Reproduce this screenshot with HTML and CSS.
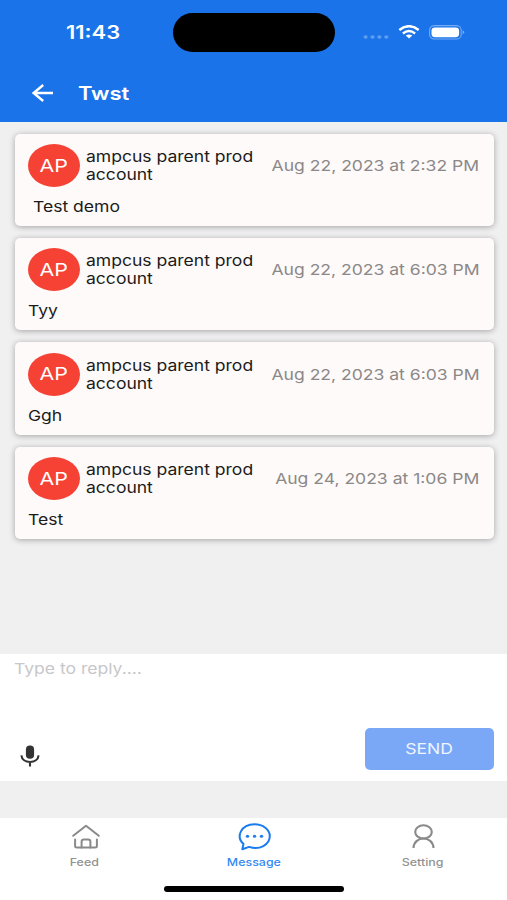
FILE: index.html
```html
<!DOCTYPE html>
<html lang="en">
<head>
<meta charset="utf-8">
<title>Twst</title>
<link rel="stylesheet" href="styles.css">
</head>
<body>
<div class="screen">
  <header class="header">
    <div class="status">
      <div class="clock"><span class="wide">11:43</span></div>
      <div class="island"></div>
      <div class="indicators">
        <svg class="dots" width="26" height="6" viewBox="0 0 26 6"><g fill="#5f9df1"><ellipse cx="2.6" cy="3" rx="2.1" ry="1.8"/><ellipse cx="9.5" cy="3" rx="2.1" ry="1.8"/><ellipse cx="16.4" cy="3" rx="2.1" ry="1.8"/><ellipse cx="23.3" cy="3" rx="2.1" ry="1.8"/></g></svg>
        <svg class="wifi" width="22" height="14" viewBox="0 0 22 14"><g fill="none" stroke="#fff" stroke-width="2.5"><path d="M1.3 5Q11-2.6 20.7 5"/><path d="M4.9 8.4Q11 3.6 17.1 8.4"/></g><path d="M7.7 10.6Q11 8.2 14.3 10.6L11 13.6Z" fill="#fff"/></svg>
        <svg class="battery" width="36" height="15" viewBox="0 0 36 15"><rect x=".6" y=".6" width="31.6" height="13.4" rx="4.6" fill="none" stroke="#75abf4" stroke-width="1.1"/><rect x="2.5" y="2.4" width="27.6" height="9.8" rx="3.4" fill="#fff"/><path d="M33.6 5.2q1.6.6 1.6 2.1t-1.6 2.1z" fill="#75abf4"/></svg>
      </div>
    </div>
    <div class="titlebar">
      <svg class="back" width="22" height="18" viewBox="0 0 22 18"><path d="M21 9H1.8M11.2 1L1.6 9l9.6 8" fill="none" stroke="#fff" stroke-width="2.4"/></svg>
      <h1 class="title"><span class="wide">Twst</span></h1>
    </div>
  </header>

  <main class="messages">
    <article class="card">
      <div class="meta">
        <div class="avatar"><span class="wide">AP</span></div>
        <div class="name"><span class="wide">ampcus parent prod<br>account</span></div>
        <time class="date"><span class="wide">Aug 22, 2023 at 2:32 PM</span></time>
      </div>
      <p class="text indented"><span class="wide">Test demo</span></p>
    </article>
    <article class="card">
      <div class="meta">
        <div class="avatar"><span class="wide">AP</span></div>
        <div class="name"><span class="wide">ampcus parent prod<br>account</span></div>
        <time class="date"><span class="wide">Aug 22, 2023 at 6:03 PM</span></time>
      </div>
      <p class="text"><span class="wide">Tyy</span></p>
    </article>
    <article class="card">
      <div class="meta">
        <div class="avatar"><span class="wide">AP</span></div>
        <div class="name"><span class="wide">ampcus parent prod<br>account</span></div>
        <time class="date"><span class="wide">Aug 22, 2023 at 6:03 PM</span></time>
      </div>
      <p class="text"><span class="wide">Ggh</span></p>
    </article>
    <article class="card">
      <div class="meta">
        <div class="avatar"><span class="wide">AP</span></div>
        <div class="name"><span class="wide">ampcus parent prod<br>account</span></div>
        <time class="date"><span class="wide">Aug 24, 2023 at 1:06 PM</span></time>
      </div>
      <p class="text"><span class="wide">Test</span></p>
    </article>
  </main>

  <section class="composer">
    <div class="placeholder"><span class="wide">Type to reply....</span></div>
    <div class="actions">
      <svg class="mic" width="20" height="22" viewBox="0 0 20 22"><rect x="5.9" y=".4" width="8.2" height="13.4" rx="4" fill="#333"/><path d="M1.4 10.4C1.8 14.6 5.5 17 10 17s8.2-2.4 8.6-6.6M10 17v4.5" fill="none" stroke="#333" stroke-width="2.1"/></svg>
      <div class="send"><span class="wide">SEND</span></div>
    </div>
  </section>

  <nav class="tabs">
    <div class="tab">
      <svg width="34" height="28" viewBox="0 0 34 28"><g fill="none" stroke="#8a8a8a" stroke-width="2" stroke-linecap="round" stroke-linejoin="round"><path d="M5.2 12.8L18 2.7 30.800 12.8M7.100 16.400v6.700q0 1.500 1.800 1.500h18.200q1.800 0 1.800-1.500v-6.700"/><path d="M13.600 24.500v-5.700q0-2.200 2.400-2.200h4q2.400 0 2.400 2.200v5.700"/></g></svg>
      <span class="wide">Feed</span>
    </div>
    <div class="tab active">
      <svg width="34" height="28" viewBox="0 0 34 28"><path d="M5.300 26.200L6.500 20.900C-1.400 13.800 3.900 1.200 17.500 1.200c8.500 0 15.300 5.300 15.300 11.900 0 8.700-10.300 14.500-20.700 10.800Z" fill="none" stroke="#1b7cf0" stroke-width="2" stroke-linejoin="round"/><g fill="#1b7cf0"><ellipse cx="10.500" cy="13.200" rx="1.700" ry="1.500"/><ellipse cx="17.500" cy="13.200" rx="1.700" ry="1.500"/><ellipse cx="24.500" cy="13.200" rx="1.700" ry="1.500"/></g></svg>
      <span class="wide">Message</span>
    </div>
    <div class="tab">
      <svg width="34" height="28" viewBox="0 0 34 28"><g fill="none" stroke="#8a8a8a" stroke-width="2.100"><ellipse cx="17.500" cy="8.900" rx="8.300" ry="6.600"/><path d="M7.500 25C8.100 12.300 26.900 12.300 27.500 25"/></g></svg>
      <span class="wide">Setting</span>
    </div>
    <div class="home"></div>
  </nav>
</div>
</body>
</html>
```
FILE: styles.css
```css
* { box-sizing: border-box; }
body { margin: 0; font-family: Inter, "Liberation Sans", sans-serif; color: #1c1a1a; }
.screen { width: 507px; height: 900px; overflow: hidden; display: flex; flex-direction: column; background: #f0f0f0; }
h1, p { margin: 0; font-weight: inherit; }
svg { display: block; flex: none; }
.wide { display: inline-block; white-space: nowrap; transform: scaleX(1.185); transform-origin: left center; }

.header { height: 122px; flex: none; background: #1a73e8; color: #fff; }
.status { height: 64px; display: grid; grid-template-columns: 173px 162px 1fr; align-items: center; }
.clock { padding: 1px 0 0 66px; font-size: 18px; font-weight: 600; line-height: 22px; }
.clock .wide, .title .wide, .avatar .wide { transform: scaleX(1.22); }
.island { height: 39px; border-radius: 20px; background: #000; }
.indicators { display: flex; align-items: center; padding-left: 28px; }
.dots { margin-top: 9px; }
.wifi { margin-left: 9px; }
.battery { margin-left: 9px; }
.titlebar { height: 58px; display: flex; align-items: center; padding-left: 32px; }
.title { margin-left: 24px; padding-top: 1px; font-size: 18px; font-weight: 600; line-height: 22px; }

.messages { height: 532px; flex: none; padding: 11.5px 13.5px 0 14.5px; display: flex; flex-direction: column; gap: 12.2px; }
.card { height: 92.3px; flex: none; padding: 10.5px 14px 0 13.5px; border-radius: 5px; background: #fefaf9; box-shadow: 0 1px 6px rgba(0, 0, 0, .32); }
.meta { display: flex; height: 43px; align-items: center; font-size: 14.8px; line-height: 18px; }
.avatar { width: 52px; height: 43px; flex: none; border-radius: 50%; background: #f64135; color: #fff; display: flex; align-items: center; justify-content: center; font-size: 17.5px; }
.avatar .wide { transform-origin: center; }
.name { width: 170px; margin-left: 6px; flex: none; padding-top: 1px; }
.date { margin-left: auto; padding-top: 1px; color: #8b8888; }
.date .wide { transform-origin: right center; }
.text { margin-top: 11px; font-size: 14.8px; line-height: 18px; }
.indented { padding-left: 5px; }

.composer { height: 127px; flex: none; background: #fff; padding: 6px 13px 11px 14px; display: flex; flex-direction: column; justify-content: space-between; }
.placeholder { color: #c7c7c9; font-size: 14.8px; line-height: 18px; }
.actions { display: flex; justify-content: space-between; align-items: center; padding-left: 6px; }
.mic { margin-top: 14px; }
.send { width: 129px; height: 42px; border-radius: 5px; background: #7ba8f6; color: #eef5ff; display: flex; align-items: center; justify-content: center; font-size: 14.8px; }
.send .wide, .tab .wide { transform-origin: center; }

.tabs { position: relative; height: 82px; margin-top: 37px; flex: none; background: #fff; display: grid; grid-template-columns: repeat(3, 1fr); }
.tab { display: flex; flex-direction: column; align-items: center; padding-top: 5px; color: #929292; font-size: 10.5px; font-weight: 500; line-height: 14px; gap: 5px; }
.active { color: #3489f4; }
.home { position: absolute; left: 164px; bottom: 8.5px; width: 180px; height: 5.5px; border-radius: 3px; background: #000; }
```
